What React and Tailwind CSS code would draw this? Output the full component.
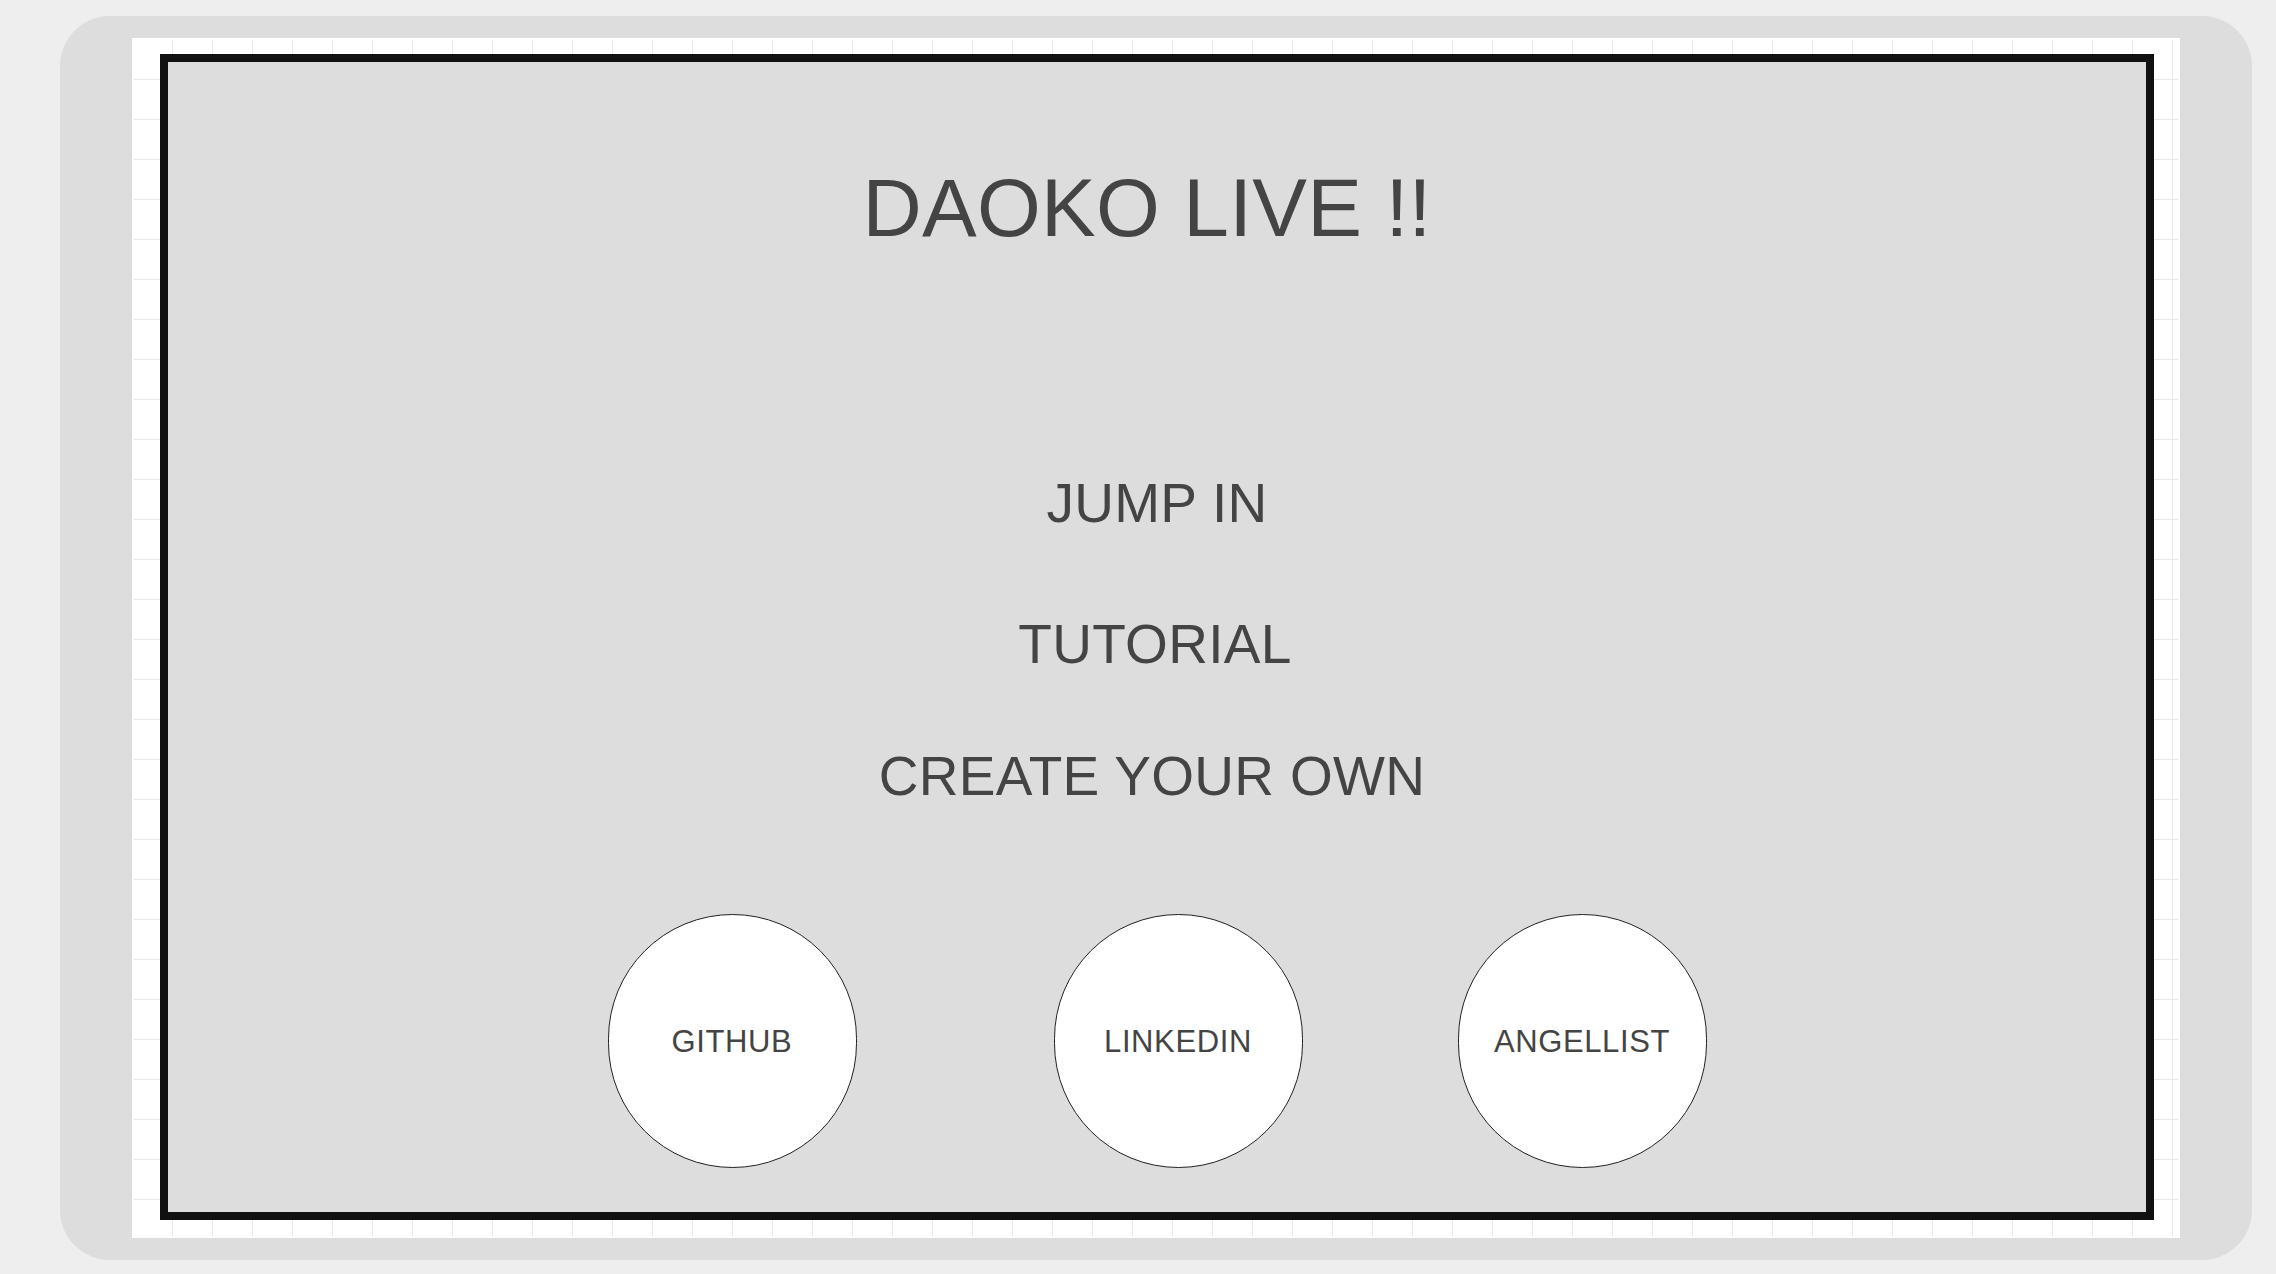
const links = [
  { label: 'GITHUB', gap: '' },
  { label: 'LINKEDIN', gap: 'ml-[197px]' },
  { label: 'ANGELLIST', gap: 'ml-[155px]' },
]

function LinkCircle({ label, gap }) {
  return (
    <div
      className={`${gap} flex h-[254px] w-[249px] items-center justify-center rounded-full border-[1.5px] border-[#222] bg-white text-[31px] leading-none tracking-[0.02em] text-[#444]`}
    >
      {label}
    </div>
  )
}

export default function App() {
  return (
    <div className="h-[1274px] w-[2276px] bg-[#eeeeee] pl-[60px] pt-[16px] font-['Liberation_Sans',Arial,sans-serif]">
      <div className="h-[1244px] w-[2192px] rounded-[50px] bg-[#dddddd] px-[72px] py-[22px]">
        <div className="h-[1200px] w-[2048px] bg-white p-[2px]">
          <div className="h-full w-full bg-[linear-gradient(to_right,#e9e9e9_1.5px,transparent_1.5px),linear-gradient(to_bottom,#e9e9e9_1.5px,transparent_1.5px)] bg-[size:40px_40px] bg-[position:38px_39px] pl-[26px] pr-[24px] pt-[14px] pb-[16px]">
            <div className="flex h-full w-full flex-col items-center border-[8px] border-[#111111] bg-[#dddddd] pt-[105px] tracking-[0.02em] text-[#444444]">
              <h1 className="pr-[20px] text-[82px] font-normal leading-none">
                DAOKO LIVE !!
              </h1>

              <div className="mt-[227px] text-[55px] leading-none">JUMP IN</div>
              <div className="mt-[86px] pr-[4px] text-[55px] leading-none">TUTORIAL</div>
              <div className="mt-[77px] pr-[10px] text-[55px] leading-none">
                CREATE YOUR OWN
              </div>

              <div className="mt-[110px] flex justify-center">
                {links.map((l) => (
                  <LinkCircle key={l.label} label={l.label} gap={l.gap} />
                ))}
              </div>
            </div>
          </div>
        </div>
      </div>
    </div>
  )
}
